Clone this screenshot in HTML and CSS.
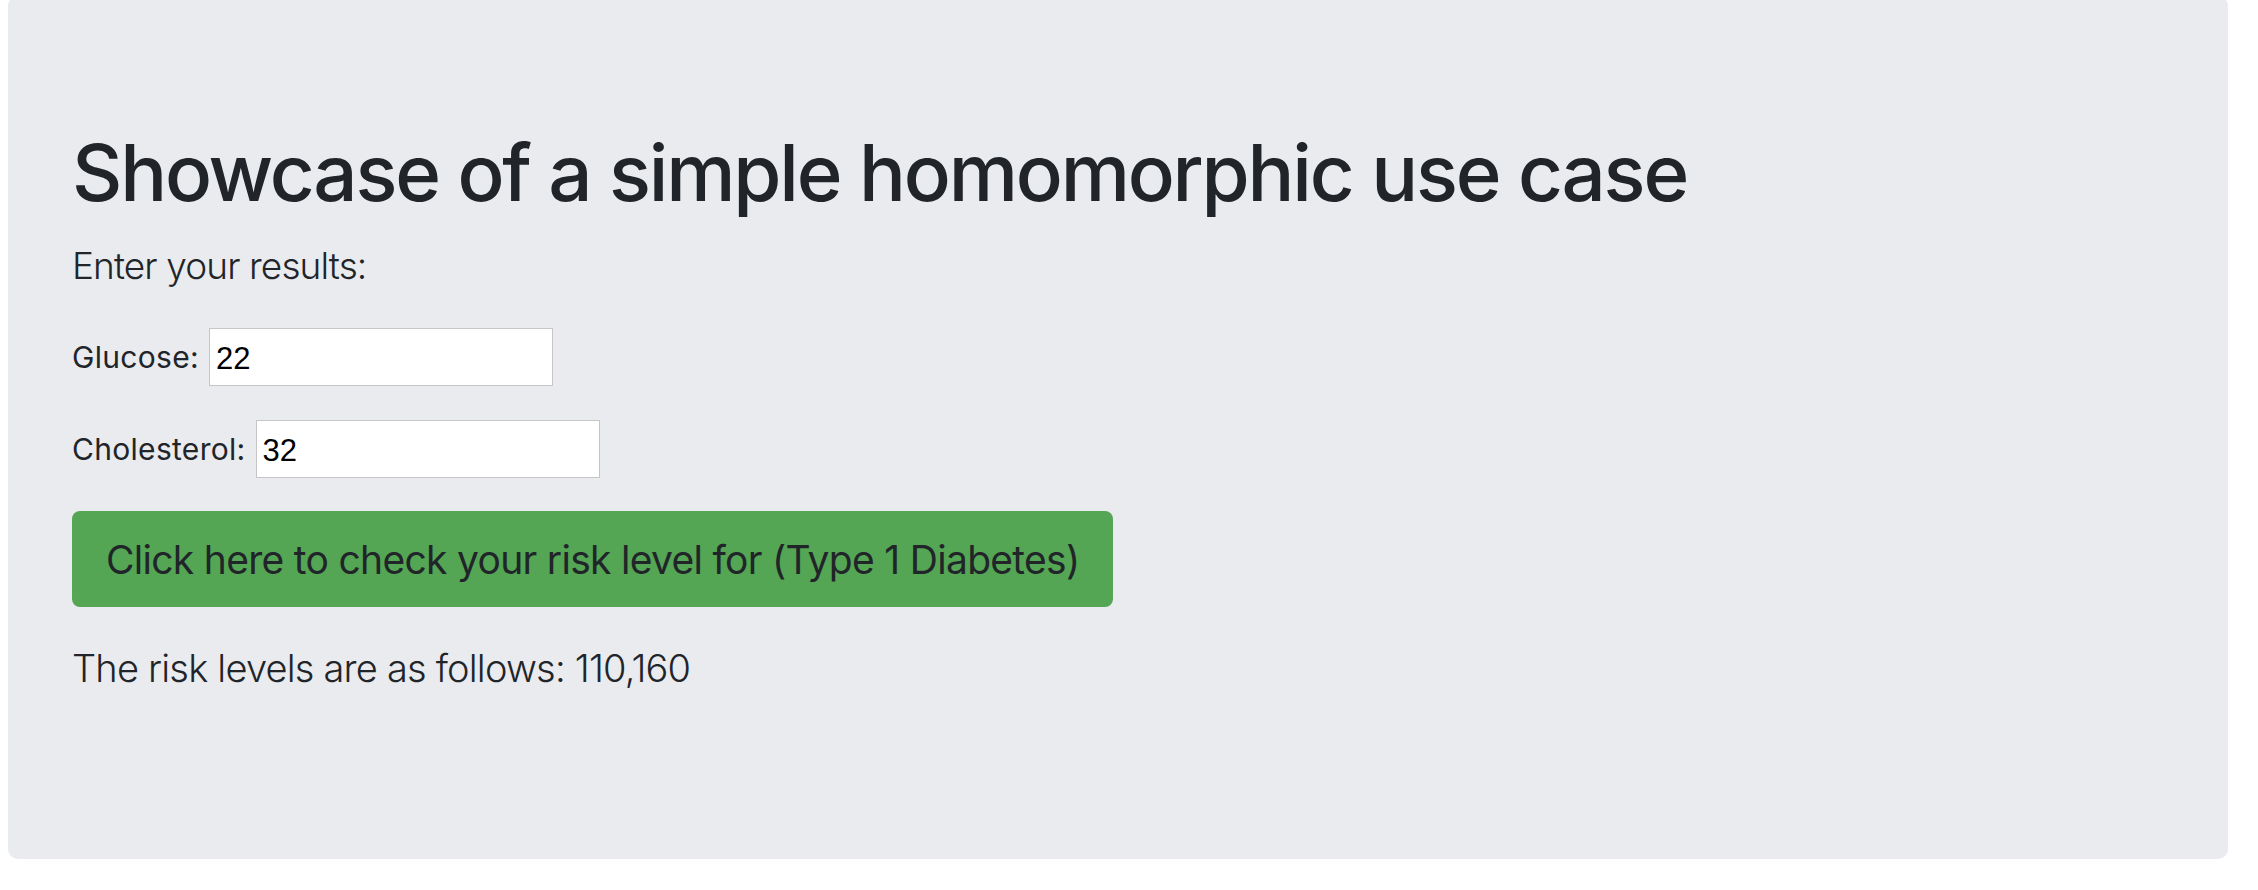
FILE: index.html
```html
<!DOCTYPE html>
<html lang="en">
<head>
<meta charset="utf-8">
<title>Homomorphic showcase</title>
<link rel="stylesheet" href="styles.css">
</head>
<body>
<div class="jumbotron">
  <h1 class="title">Showcase of a simple homomorphic use case</h1>
  <p class="lead">Enter your results:</p>
  <div class="field">
    <label class="field-label" for="glucose">Glucose:</label>
    <input class="field-input" id="glucose" type="text" value="22">
  </div>
  <div class="field">
    <label class="field-label" for="chol">Cholesterol:</label>
    <input class="field-input" id="chol" type="text" value="32">
  </div>
  <button class="check-btn" type="button">Click here to check your risk level for (Type 1 Diabetes)</button>
  <p class="result">The risk levels are as follows: 110,160</p>
</div>
</body>
</html>
```

FILE: styles.css
```css
html, body {
  margin: 0;
  padding: 0;
  background: #ffffff;
}

body {
  font-family: Inter, "Noto Sans", sans-serif;
  color: #212529;
}

.jumbotron {
  box-sizing: border-box;
  margin: -4px 30px 0 8px;
  height: 863px;
  padding: 128px 64px 0 64px;
  background: #e9ebef;
  border-radius: 10px;
  display: flex;
  flex-direction: column;
  align-items: flex-start;
}

.title {
  margin: 0;
  font-size: 78px;
  line-height: 98px;
  font-weight: 500;
  letter-spacing: -2.2px;
}

.lead {
  margin: 15px 0 0 0;
  font-size: 37px;
  line-height: 57px;
  font-weight: 300;
  letter-spacing: -0.9px;
}

.field {
  display: flex;
  align-items: center;
  gap: 10px;
  margin-top: 34px;
}

.field-label {
  font-size: 30px;
  font-weight: 400;
  letter-spacing: 0.3px;
}

.field-input {
  box-sizing: border-box;
  width: 344px;
  height: 58px;
  margin: 0;
  padding: 3px 6px 0 6px;
  border: 1px solid #c6c6c6;
  border-radius: 0;
  background: #ffffff;
  font-family: "Liberation Sans", Arial, sans-serif;
  font-size: 31px;
  color: #000000;
  outline: none;
}

.check-btn {
  margin-top: 33px;
  height: 96px;
  padding: 0 34px;
  border: none;
  border-radius: 8px;
  background: #54a554;
  color: #212529;
  font-family: Inter, "Noto Sans", sans-serif;
  font-size: 39px;
  font-weight: 400;
  letter-spacing: -0.7px;
  cursor: pointer;
}

.result {
  margin: 31px 0 0 0;
  font-size: 38px;
  line-height: 60px;
  font-weight: 300;
  letter-spacing: -0.8px;
}
```
